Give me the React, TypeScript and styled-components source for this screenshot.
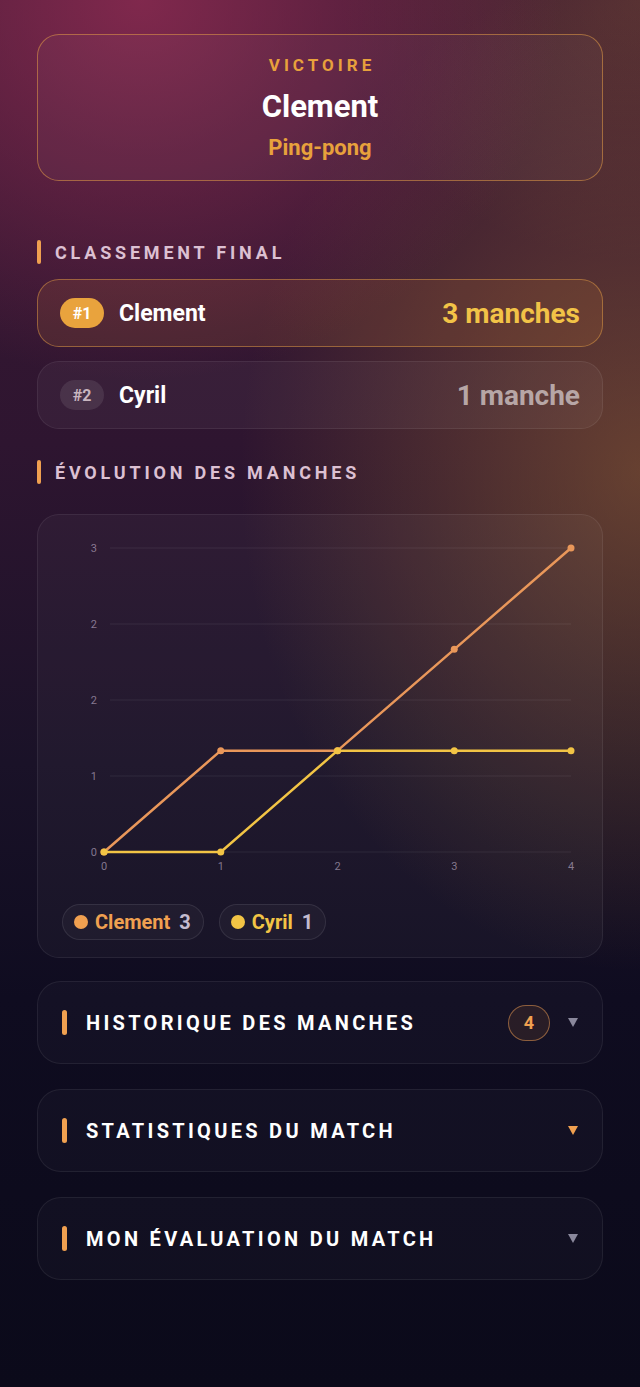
import React from "react";
import styled, { createGlobalStyle } from "styled-components";

const GlobalStyle = createGlobalStyle`
    html, body {
        margin: 0;
        padding: 0;
        background: #0b0a1a;
    }
    body {
        font-family: Roboto, "Liberation Sans", Arial, sans-serif;
        color: #ffffff;
    }
    * {
        box-sizing: border-box;
    }
`;

const Page = styled.div`
    min-height: 1387px;
    padding: 34px 37px 60px;
    display: flex;
    flex-direction: column;
    background:
        radial-gradient(ellipse 420px 380px at 22% 0%, rgba(150, 45, 85, 0.75), transparent 100%),
        radial-gradient(ellipse 400px 500px at 100% 34%, rgba(150, 100, 50, 0.55), transparent 100%),
        radial-gradient(ellipse 300px 260px at 100% 0%, rgba(110, 70, 50, 0.5), transparent 100%),
        linear-gradient(180deg, #3e1a34 0%, #2e1530 32%, #1a1228 55%, #0f0c20 72%, #0b0a1a 100%);
`;

const Hero = styled.div`
    height: 147px;
    border-radius: 22px;
    border: 1.5px solid rgba(225, 155, 70, 0.55);
    background: rgba(255, 255, 255, 0.03);
    display: flex;
    flex-direction: column;
    align-items: center;
    justify-content: center;
`;

const Kicker = styled.div`
    font-size: 17px;
    line-height: 20px;
    font-weight: 700;
    letter-spacing: 4px;
    color: #e8a13c;
    margin-right: -4px;
`;

const Winner = styled.div`
    font-size: 31px;
    line-height: 36px;
    font-weight: 700;
    color: #ffffff;
    margin-top: 14px;
`;

const Sport = styled.div`
    font-size: 22px;
    line-height: 26px;
    font-weight: 700;
    color: #e8a13c;
    margin-top: 10px;
`;

const SectionTitle = styled.div`
    display: flex;
    align-items: center;
    gap: 14px;
    margin: 59px 0 15px;
    font-size: 18px;
    font-weight: 700;
    letter-spacing: 3.8px;
    color: #dcc0d2;

    &::before {
        content: "";
        width: 4px;
        height: 24px;
        border-radius: 2px;
        background: #f0a050;
    }
`;

const ChartTitle = styled(SectionTitle)`
    margin: 31px 0 30px;
`;

const Ranks = styled.div`
    display: flex;
    flex-direction: column;
    gap: 14px;
`;

const RankRow = styled.div<{ $first?: boolean }>`
    height: 68px;
    border-radius: 22px;
    padding: 0 22px;
    display: flex;
    align-items: center;
    border: 1.5px solid ${(p) => (p.$first ? "rgba(225, 155, 70, 0.5)" : "rgba(255, 255, 255, 0.07)")};
    background: ${(p) => (p.$first ? "rgba(235, 150, 60, 0.12)" : "rgba(255, 255, 255, 0.04)")};
`;

const RankBadge = styled.div<{ $first?: boolean }>`
    width: 44px;
    height: 30px;
    border-radius: 15px;
    display: flex;
    align-items: center;
    justify-content: center;
    font-size: 16px;
    font-weight: 700;
    background: ${(p) => (p.$first ? "#e9a33d" : "rgba(255, 255, 255, 0.09)")};
    color: ${(p) => (p.$first ? "#ffffff" : "#c9b6c0")};
`;

const RankName = styled.div`
    margin-left: 15px;
    font-size: 23px;
    font-weight: 700;
    color: #ffffff;
    flex: 1;
`;

const RankScore = styled.div<{ $first?: boolean }>`
    font-size: 28px;
    font-weight: 700;
    color: ${(p) => (p.$first ? "#f2c347" : "#b7a6a6")};
`;

const ChartCard = styled.div`
    border-radius: 22px;
    border: 1.5px solid rgba(255, 255, 255, 0.07);
    background: rgba(255, 255, 255, 0.03);
    padding: 18px 24px 17px;
    display: flex;
    flex-direction: column;
    gap: 21px;
`;

const Legend = styled.div`
    display: flex;
    gap: 15px;
`;

const LegendPill = styled.div<{ $color: string }>`
    height: 36px;
    padding: 0 12px 0 11px;
    border-radius: 18px;
    border: 1.5px solid rgba(255, 255, 255, 0.09);
    background: rgba(255, 255, 255, 0.03);
    display: flex;
    align-items: center;
    gap: 7px;
    font-size: 20px;
    font-weight: 700;
    color: ${(p) => p.$color};

    &::before {
        content: "";
        width: 14px;
        height: 14px;
        border-radius: 50%;
        background: ${(p) => p.$color};
    }
`;

const LegendValue = styled.span`
    color: #c4bccf;
    margin-left: 2px;
`;

const Accordions = styled.div`
    display: flex;
    flex-direction: column;
    gap: 25px;
    margin-top: 23px;
`;

const Accordion = styled.div`
    height: 83px;
    border-radius: 24px;
    border: 1.5px solid rgba(255, 255, 255, 0.07);
    background: rgba(255, 255, 255, 0.025);
    padding: 0 24px 0 24px;
    display: flex;
    align-items: center;

    &::before {
        content: "";
        width: 5px;
        height: 25px;
        border-radius: 3px;
        background: #f0a050;
        margin-right: 19px;
    }
`;

const AccordionLabel = styled.div`
    flex: 1;
    font-size: 20px;
    font-weight: 700;
    letter-spacing: 3.3px;
    color: #ffffff;
`;

const CountBadge = styled.div`
    width: 42px;
    height: 36px;
    border-radius: 18px;
    border: 1.5px solid rgba(225, 150, 80, 0.55);
    background: rgba(200, 120, 60, 0.12);
    display: flex;
    align-items: center;
    justify-content: center;
    font-size: 18px;
    font-weight: 700;
    color: #f0a050;
    margin-right: 18px;
`;

const Caret = ({ color }: { color: string }) => (
    <svg width="10" height="9" viewBox="0 0 10 9">
        <path d="M0 0 L10 0 L5 9 Z" fill={color} />
    </svg>
);

const clement = [0, 1, 1, 2, 3];
const cyril = [0, 0, 1, 1, 1];

// plot area inside the svg
const X0 = 42;
const STEP = 116.75;
const Y0 = 319;
const YH = 304;
const px = (i: number) => X0 + i * STEP;
const py = (v: number) => Y0 - (v / 3) * YH;

const Chart = () => {
    const ticks = [0, 0.75, 1.5, 2.25, 3];
    const series = [
        { data: clement, color: "#e9975a" },
        { data: cyril, color: "#f2c445" },
    ];
    return (
        <svg width="516" height="350" viewBox="0 0 516 350">
            {ticks.map((t) => (
                <g key={t}>
                    <line
                        x1={X0 + 6}
                        x2={px(4)}
                        y1={py(t)}
                        y2={py(t)}
                        stroke="rgba(255,255,255,0.07)"
                        strokeWidth="1"
                    />
                    <text
                        x={X0 - 7}
                        y={py(t) + 4}
                        textAnchor="end"
                        fontSize="11"
                        fill="rgba(200,185,210,0.6)"
                        fontFamily="Roboto, sans-serif"
                    >
                        {Math.round(t)}
                    </text>
                </g>
            ))}
            {[0, 1, 2, 3, 4].map((i) => (
                <text
                    key={i}
                    x={px(i)}
                    y={Y0 + 18}
                    textAnchor="middle"
                    fontSize="11"
                    fill="rgba(200,185,210,0.6)"
                    fontFamily="Roboto, sans-serif"
                >
                    {i}
                </text>
            ))}
            {series.map((s) => (
                <g key={s.color}>
                    <polyline
                        points={s.data.map((v, i) => `${px(i)},${py(v)}`).join(" ")}
                        fill="none"
                        stroke={s.color}
                        strokeWidth="2.5"
                        strokeLinejoin="round"
                    />
                    {s.data.map((v, i) => (
                        <circle key={i} cx={px(i)} cy={py(v)} r="3.5" fill={s.color} />
                    ))}
                </g>
            ))}
        </svg>
    );
};

export default function App() {
    return (
        <>
            <GlobalStyle />
            <Page>
                <Hero>
                    <Kicker>VICTOIRE</Kicker>
                    <Winner>Clement</Winner>
                    <Sport>Ping-pong</Sport>
                </Hero>

                <SectionTitle>CLASSEMENT FINAL</SectionTitle>
                <Ranks>
                    <RankRow $first>
                        <RankBadge $first>#1</RankBadge>
                        <RankName>Clement</RankName>
                        <RankScore $first>3 manches</RankScore>
                    </RankRow>
                    <RankRow>
                        <RankBadge>#2</RankBadge>
                        <RankName>Cyril</RankName>
                        <RankScore>1 manche</RankScore>
                    </RankRow>
                </Ranks>

                <ChartTitle>ÉVOLUTION DES MANCHES</ChartTitle>
                <ChartCard>
                    <Chart />
                    <Legend>
                        <LegendPill $color="#f0a050">
                            Clement <LegendValue>3</LegendValue>
                        </LegendPill>
                        <LegendPill $color="#f2c445">
                            Cyril <LegendValue>1</LegendValue>
                        </LegendPill>
                    </Legend>
                </ChartCard>

                <Accordions>
                    <Accordion>
                        <AccordionLabel>HISTORIQUE DES MANCHES</AccordionLabel>
                        <CountBadge>4</CountBadge>
                        <Caret color="#8a889c" />
                    </Accordion>
                    <Accordion>
                        <AccordionLabel>STATISTIQUES DU MATCH</AccordionLabel>
                        <Caret color="#f0a050" />
                    </Accordion>
                    <Accordion>
                        <AccordionLabel>MON ÉVALUATION DU MATCH</AccordionLabel>
                        <Caret color="#8a889c" />
                    </Accordion>
                </Accordions>
            </Page>
        </>
    );
}
